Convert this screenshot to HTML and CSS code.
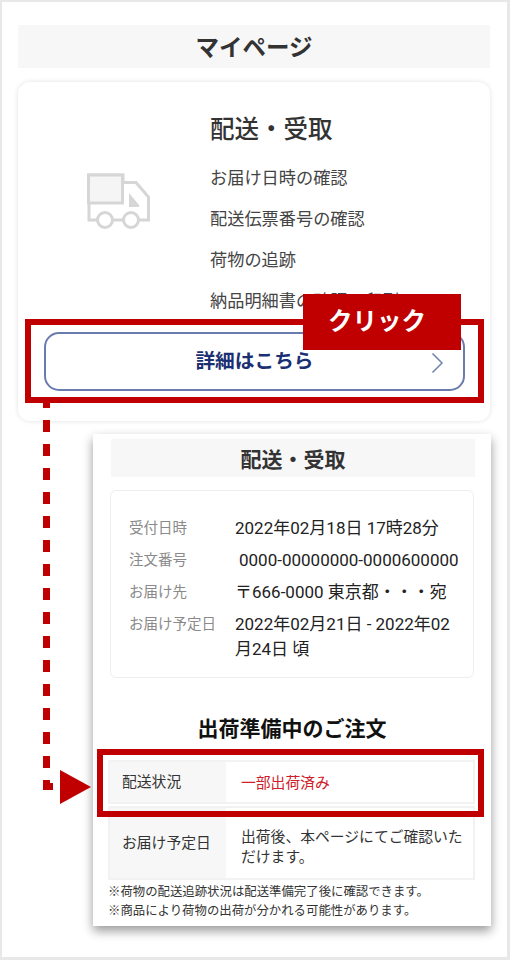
FILE: index.html
```html
<!DOCTYPE html>
<html lang="ja">
<head>
    <meta charset="UTF-8">
    <title>マイページ</title>
    <link rel="stylesheet" href="styles.css">
</head>
<body>
    <div class="frame">
        <h1 class="page-title">マイページ</h1>

        <div class="card">
            <div class="card-body">
                <svg class="truck" width="66" height="60" viewBox="86 172 66 60">
                    <path d="M123 182.500 H136 L148.500 197 V220 H89 V175 H123 Z" fill="#fff" stroke="#d6d6d6" stroke-width="3"/>
                    <rect x="88.500" y="175" width="34" height="28" fill="#f5f5f5" stroke="#d6d6d6" stroke-width="3"/>
                    <path d="M129 193 L139 205 V207 H129 Z" fill="#d6d6d6"/>
                    <circle cx="105" cy="220" r="7.500" fill="#fff" stroke="#d6d6d6" stroke-width="3"/>
                    <circle cx="131" cy="220" r="7.500" fill="#fff" stroke="#d6d6d6" stroke-width="3"/>
                </svg>
                <div class="card-text">
                    <h2>配送・受取</h2>
                    <ul>
                        <li>お届け日時の確認</li>
                        <li>配送伝票番号の確認</li>
                        <li>荷物の追跡</li>
                        <li>納品明細書の確認・印刷</li>
                    </ul>
                </div>
            </div>
            <a class="detail-btn">
                詳細はこちら
                <svg class="chevron" width="13" height="22" viewBox="0 0 13 22">
                    <path d="M1.500 1.500 L11 11 L1.500 20.500" fill="none" stroke="#6d84ad" stroke-width="1.500"/>
                </svg>
            </a>
        </div>

        <div class="panel">
            <h2 class="panel-title">配送・受取</h2>

            <dl class="info">
                <dt>受付日時</dt>
                <dd>2022年02月18日 17時28分</dd>
                <dt>注文番号</dt>
                <dd class="order-no">0000-00000000-0000600000</dd>
                <dt>お届け先</dt>
                <dd>〒666-0000 東京都・・・宛</dd>
                <dt>お届け予定日</dt>
                <dd>2022年02月21日 - 2022年02月24日 頃</dd>
            </dl>

            <h3 class="status-title">出荷準備中のご注文</h3>

            <div class="status-row">
                <div class="status-label">配送状況</div>
                <div class="status-value red">一部出荷済み</div>
            </div>
            <div class="status-row">
                <div class="status-label">お届け予定日</div>
                <div class="status-value">出荷後、本ページにてご確認いただけます。</div>
            </div>

            <p class="note first-note">※荷物の配送追跡状況は配送準備完了後に確認できます。</p>
            <p class="note">※商品により荷物の出荷が分かれる可能性があります。</p>
        </div>

        <!-- 注釈 -->
        <div class="mark mark-btn"></div>
        <div class="click-label">クリック</div>
        <div class="dash"></div>
        <div class="dash-end"></div>
        <div class="arrow"></div>
        <div class="mark mark-status"></div>
    </div>
</body>
</html>
```

FILE: styles.css
```css
* {
    box-sizing: border-box;
}

body {
    margin: 0;
    font-family: 'Noto Sans CJK JP', 'Noto Sans', sans-serif;
    color: #333;
    background-color: white;
}

.frame {
    position: relative;
    width: 510px;
    height: 960px;
    padding: 23px 17px 0 16px;
    border: 2px solid #e8e8e8;
    border-right-width: 3px;
    border-bottom-width: 3px;
    overflow: hidden;
}

.page-title {
    margin: 0;
    height: 43px;
    line-height: 43px;
    font-size: 23.500px;
    font-weight: 700;
    text-align: center;
    background-color: #f7f7f7;
}

.card {
    height: 339px;
    margin-top: 14px;
    padding: 0 25px 0 27px;
    border-radius: 12px;
    box-shadow: 0 0 5px rgba(0, 0, 0, 0.12);
}

.card-body {
    display: flex;
    height: 250px;
}

.truck {
    margin: 90px 0 0 41px;
    flex-shrink: 0;
}

.card-text {
    margin-left: 58px;
    padding-top: 28px;
}

.card-text h2 {
    margin: 0 0 10px;
    font-size: 24.500px;
    line-height: 36px;
    font-weight: 500;
}

.card-text ul {
    margin: 0;
    padding: 0;
    list-style: none;
}

.card-text li {
    height: 41px;
    line-height: 41px;
    font-size: 17.200px;
    color: #444;
    white-space: nowrap;
}

.detail-btn {
    display: flex;
    position: relative;
    justify-content: center;
    align-items: center;
    height: 59px;
    margin-left: -1px;
    padding: 0 0 4px 0;
    border: 2px solid #6a7cad;
    border-radius: 15px;
    font-size: 19.700px;
    font-weight: 700;
    color: #1b2f73;
}

.chevron {
    position: absolute;
    right: 19px;
    top: 18px;
}

.panel {
    width: 398px;
    height: 492px;
    margin: 13px 0 0 75px;
    padding: 5px 16px 0 15px;
    background-color: white;
    box-shadow: 0 5px 10px rgba(0, 0, 0, 0.4);
}

.panel-title {
    margin: 0 0 13px 3px;
    height: 38px;
    line-height: 38px;
    font-size: 21px;
    font-weight: 700;
    text-align: center;
    background-color: #f7f7f7;
}

.info {
    display: grid;
    grid-template-columns: 106px 1fr;
    align-content: start;
    height: 188px;
    margin: 0 1px 0 2px;
    padding: 21px 12px 0 18px;
    border: 1px solid #eee;
    border-radius: 6px;
}

.info dt {
    line-height: 30px;
    font-size: 14.500px;
    color: #8a8a8a;
}

.info dd {
    margin: 0;
    min-height: 32px;
    line-height: 32px;
    font-family: Roboto, 'Noto Sans CJK JP', sans-serif;
    font-size: 17px;
    color: #222;
}

.info dd:last-child {
    line-height: 25px;
    padding-top: 4px;
}

.order-no {
    padding-left: 4px;
    white-space: nowrap;
}

.status-title {
    margin: 32px 0 16px 1px;
    line-height: 34px;
    font-size: 21px;
    font-weight: 700;
    color: #111;
    text-align: center;
}

.status-row {
    display: flex;
    border: 2px solid #f2f2f2;
    margin-bottom: 2px;
    font-size: 14.800px;
    line-height: 20px;
}

.status-row:first-of-type {
    height: 44px;
}

.status-row + .status-row {
    height: 74px;
    margin-bottom: 0;
}

.status-label {
    display: flex;
    align-items: center;
    width: 116px;
    padding: 0 0 2px 12px;
    background-color: #f7f7f7;
    flex-shrink: 0;
}

.status-value {
    display: flex;
    align-items: center;
    padding: 0 8px 0 15px;
}

.status-row + .status-row .status-value {
    padding-top: 5px;
}

.red {
    color: #d0202a;
}

.note {
    margin: 0;
    line-height: 19px;
    font-size: 12.400px;
    white-space: nowrap;
}

.first-note {
    margin-top: 2px;
}

.mark {
    position: absolute;
    border: 6px solid #c00000;
}

.mark-btn {
    left: 23px;
    top: 317px;
    width: 459px;
    height: 84px;
}

.mark-status {
    left: 95px;
    top: 747px;
    width: 387px;
    height: 68px;
}

.click-label {
    position: absolute;
    left: 301px;
    top: 292px;
    width: 158px;
    height: 56px;
    padding-right: 10px;
    line-height: 52px;
    font-size: 24.500px;
    font-weight: 700;
    text-align: center;
    color: white;
    background-color: #c00000;
}

/* 点線は上端がボタン枠の下から始まる */
.dash {
    position: absolute;
    left: 41px;
    top: 401px;
    width: 7px;
    height: 387px;
    background-image: repeating-linear-gradient(to bottom, #c00000 0, #c00000 12px, white 12px, white 24px);
    background-position: 0 -7px;
}

.dash-end {
    position: absolute;
    left: 48px;
    top: 781px;
    width: 3px;
    height: 7px;
    background-color: #c00000;
}

.arrow {
    position: absolute;
    left: 58px;
    top: 768px;
    border-style: solid;
    border-width: 17.500px 0 17.500px 31px;
    border-color: transparent transparent transparent #c00000;
}
```
